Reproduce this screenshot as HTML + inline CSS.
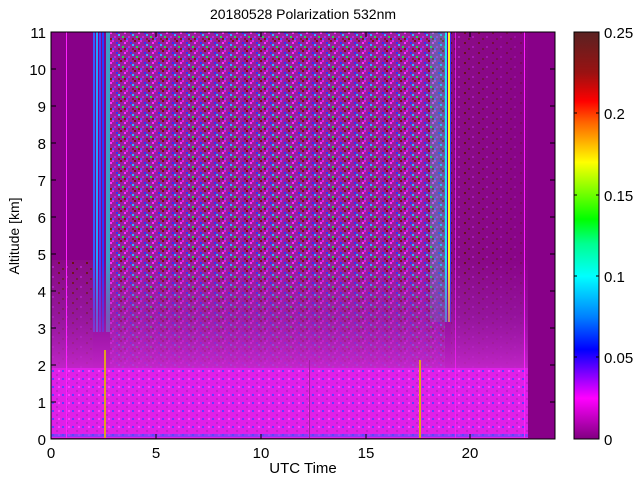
<!DOCTYPE html>
<html><head><meta charset="utf-8"><style>
html,body{margin:0;padding:0;background:#fff;width:640px;height:480px;overflow:hidden}
svg{display:block}
text{font-family:"Liberation Sans",sans-serif;fill:#000}
</style></head><body>
<svg width="640" height="480" viewBox="0 0 640 480" xmlns="http://www.w3.org/2000/svg">
<defs>
<pattern id="n1" width="14" height="10" patternUnits="userSpaceOnUse">
<rect width="14" height="10" fill="#9a1e9e"/>
<rect x="0" y="0" width="2" height="2" fill="#e020e0"/>
<rect x="4" y="2" width="2" height="2" fill="#3030ff"/>
<rect x="8" y="0" width="2" height="2" fill="#7a1010"/>
<rect x="10" y="6" width="2" height="2" fill="#20e040"/>
<rect x="2" y="6" width="2" height="2" fill="#c020e0"/>
<rect x="6" y="8" width="2" height="2" fill="#7a1a3a"/>
<rect x="12" y="2" width="2" height="2" fill="#ff30ff"/>
<rect x="6" y="4" width="2" height="2" fill="#20c0ff"/>
<rect x="0" y="8" width="2" height="2" fill="#5050ff"/>
<rect x="12" y="8" width="2" height="2" fill="#8a1010"/>
</pattern>
<pattern id="n3" width="10" height="8" patternUnits="userSpaceOnUse">
<rect width="10" height="8" fill="#e020e8"/>
<rect x="2" y="2" width="2" height="2" fill="#6040ff"/>
<rect x="6" y="6" width="2" height="2" fill="#c020d0"/>
<rect x="8" y="2" width="2" height="2" fill="#ff40ff"/>
</pattern>
<pattern id="n4" width="14" height="10" patternUnits="userSpaceOnUse">
<rect width="14" height="10" fill="#8a0c86"/>
<rect x="2" y="2" width="2" height="2" fill="#6a1010"/>
<rect x="10" y="6" width="2" height="2" fill="#b020c0"/>
<rect x="6" y="8" width="2" height="2" fill="#6a1a2a"/>
</pattern>
<linearGradient id="cb" x1="0" y1="0" x2="0" y2="1">
<stop offset="0" stop-color="#5a2222"/>
<stop offset="0.1" stop-color="#9a1212"/>
<stop offset="0.17" stop-color="#ff0000"/>
<stop offset="0.22" stop-color="#ff6000"/>
<stop offset="0.32" stop-color="#ffff00"/>
<stop offset="0.46" stop-color="#00ff00"/>
<stop offset="0.52" stop-color="#00ff90"/>
<stop offset="0.6" stop-color="#00ffff"/>
<stop offset="0.7" stop-color="#0080ff"/>
<stop offset="0.78" stop-color="#0000ff"/>
<stop offset="0.9" stop-color="#ff00ff"/>
<stop offset="1" stop-color="#800080"/>
</linearGradient>
<linearGradient id="tr" x1="0" y1="0" x2="0" y2="1">
<stop offset="0" stop-color="#a020b0" stop-opacity="0"/>
<stop offset="0.5" stop-color="#a020b0" stop-opacity="0.5"/>
<stop offset="1" stop-color="#c828d0" stop-opacity="0.9"/>
</linearGradient>
<linearGradient id="fadeR" x1="0" y1="0" x2="1" y2="0">
<stop offset="0" stop-color="#880088" stop-opacity="0"/>
<stop offset="1" stop-color="#880088" stop-opacity="0.7"/>
</linearGradient>
</defs>
<text x="303" y="19" font-size="14" text-anchor="middle">20180528 Polarization 532nm</text>
<rect x="51" y="32" width="504" height="407" fill="#880088"/>
<rect x="51" y="260" width="42" height="110" fill="url(#n4)"/>
<rect x="110" y="32" width="335" height="338" fill="url(#n1)"/>
<rect x="451" y="32" width="77" height="338" fill="url(#n4)"/>
<rect x="451" y="32" width="77" height="338" fill="url(#fadeR)"/>
<!-- stripes left -->
<rect x="93" y="32" width="2" height="300" fill="#3060ff"/>
<rect x="96" y="32" width="2" height="300" fill="#20a0ff"/>
<rect x="99" y="32" width="2" height="300" fill="#4040ff"/>
<rect x="102" y="32" width="2" height="300" fill="#2040ff"/>
<rect x="106" y="32" width="4" height="300" fill="#20e0e0" opacity="0.7"/>
<!-- stripes right -->
<rect x="430" y="32" width="15" height="290" fill="#20d0c0" opacity="0.3"/>
<rect x="445" y="32" width="2" height="290" fill="#20e0ff"/>
<rect x="448" y="32" width="2" height="290" fill="#ffff20"/>
<rect x="450" y="32" width="1" height="290" fill="#3030ff"/>
<rect x="51" y="260" width="477" height="110" fill="url(#tr)"/>
<rect x="51" y="368" width="477" height="70" fill="url(#n3)"/>
<rect x="51" y="434" width="477" height="3" fill="#5050ff" opacity="0.6"/>
<rect x="66" y="32" width="1" height="406" fill="#ff20ff"/>
<rect x="455" y="32" width="1" height="406" fill="#ff20ff" opacity="0.7"/>
<rect x="524" y="32" width="1" height="406" fill="#ff20ff"/>
<rect x="104" y="350" width="2" height="88" fill="#e0a020"/>
<rect x="419" y="360" width="2" height="78" fill="#e0a020"/>
<rect x="309" y="360" width="1" height="78" fill="#a020a0"/>
<rect x="528" y="32" width="27" height="407" fill="#880088"/>
<rect x="51" y="32" width="504" height="407" fill="none" stroke="#000" stroke-width="1"/>
<g stroke="#000" stroke-width="1">
<path d="M51 439v-5M156 439v-5M261 439v-5M366 439v-5M470 439v-5M156 32v5M261 32v5M366 32v5M470 32v5"/>
<path d="M51 402h5M51 365h5M51 328h5M51 291h5M51 254h5M51 217h5M51 180h5M51 143h5M51 106h5M51 69h5M555 402h-5M555 365h-5M555 328h-5M555 291h-5M555 254h-5M555 217h-5M555 180h-5M555 143h-5M555 106h-5M555 69h-5"/>
</g>
<g font-size="15" text-anchor="end">
<text x="46" y="445">0</text><text x="46" y="408">1</text><text x="46" y="371">2</text><text x="46" y="334">3</text><text x="46" y="297">4</text><text x="46" y="260">5</text><text x="46" y="223">6</text><text x="46" y="186">7</text><text x="46" y="149">8</text><text x="46" y="112">9</text><text x="46" y="75">10</text><text x="46" y="38">11</text>
</g>
<g font-size="15" text-anchor="middle">
<text x="51" y="458">0</text><text x="156" y="458">5</text><text x="261" y="458">10</text><text x="366" y="458">15</text><text x="470" y="458">20</text>
</g>
<text x="303" y="473" font-size="15" text-anchor="middle">UTC Time</text>
<text transform="translate(19,236) rotate(-90)" font-size="14" text-anchor="middle">Altitude [km]</text>
<rect x="574" y="32" width="25" height="407" fill="url(#cb)" stroke="#000" stroke-width="1"/>
<g stroke="#000"><path d="M574 357h3M574 276h3M574 195h3M574 113h3M599 357h-3M599 276h-3M599 195h-3M599 113h-3"/></g>
<g font-size="15">
<text x="604" y="445">0</text><text x="604" y="363">0.05</text><text x="604" y="282">0.1</text><text x="604" y="201">0.15</text><text x="604" y="119">0.2</text><text x="604" y="38">0.25</text>
</g>
</svg>
</body></html>
